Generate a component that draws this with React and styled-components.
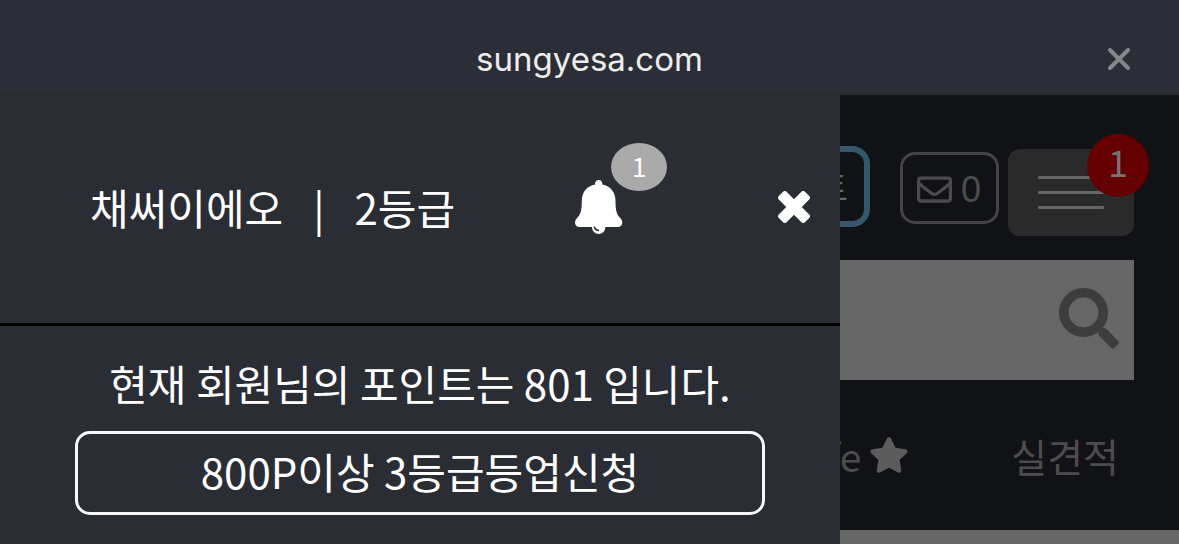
import React from 'react'
import styled, { createGlobalStyle } from 'styled-components'
import { FaRegEnvelope, FaStar } from 'react-icons/fa'

const GlobalStyle = createGlobalStyle`
* {
  box-sizing: border-box;
}
body {
  margin: 0;
  background: #2b2d35;
  color: #ffffff;
  font-family: "Noto Sans CJK KR", sans-serif;
}
button, input {
  font-family: inherit;
  color: inherit;
}
svg {
  display: block;
}
`
const Screen = styled.div`
  display: flex;
  flex-direction: column;
  min-height: 100vh;
`
const TitleBar = styled.header`
  display: grid;
  grid-template-columns: 1fr auto 1fr;
  align-items: center;
  padding: 24px 49px 0;
  height: 95px;
  background: #2b2e37;
  border-bottom: 2px solid #282b31;
`
const SiteName = styled.h1`
  grid-column: 2;
  margin: 0;
  color: #eeeeee;
  font-family: Inter, sans-serif;
  font-size: 33px;
  font-weight: 400;
  line-height: 48px;
`
const IconButton = styled.button`
  display: flex;
  align-items: center;
  justify-content: center;
  margin-left: ${props => props.$end ? "auto" : "0"};
  padding: 0;
  border: none;
  background: none;
`
const Main = styled.div`
  display: grid;
  grid-template-columns: 280fr 113fr;
  flex: 1;
`
const Drawer = styled.aside`
  min-width: 0;
  background: #2b2d35;
`
const Profile = styled.div`
  display: flex;
  align-items: center;
  height: 231px;
  padding: 0 30px 5px 90px;
  border-bottom: 3px solid #000000;
  font-size: 42px;
  line-height: 60px;
  white-space: nowrap;
`
const Member = styled.div`
  display: flex;
  gap: 30px;
  margin-right: 120px;
`
const BellButton = styled(IconButton)`
  position: relative;
`
const BellCount = styled.span`
  position: absolute;
  left: 36px;
  bottom: 43px;
  width: 56px;
  height: 48px;
  border-radius: 50%;
  background: #aaaaaa;
  font-size: 26px;
  line-height: 46px;
  text-align: center;
`
const Points = styled.div`
  display: flex;
  flex-direction: column;
  gap: 18px;
  padding: 27px 75px;
  font-size: 42px;
  line-height: 60px;
  text-align: center;
`
const PointText = styled.p`
  margin: 0;
`
const LevelUp = styled.button`
  height: 84px;
  padding: 0 0 5px;
  border: 3px solid #faf7fb;
  border-radius: 15px;
  background: none;
  font-size: 42px;
  line-height: 60px;
`
const Page = styled.main`
  display: flex;
  flex-direction: column;
  min-width: 0;
  overflow: hidden;
  background: #111215;
`
const Toolbar = styled.div`
  display: flex;
  align-items: center;
  justify-content: flex-end;
  height: 165px;
  padding: 30px 45px 0 0;
`
const PointButton = styled.button`
  flex: none;
  height: 81px;
  margin: 0 30px 12px 0;
  padding: 0 16px;
  border: 6px solid transparent;
  border-radius: 18px;
  background:
    linear-gradient(#111215, #111215) padding-box,
    linear-gradient(90deg, #4a5468, #2f596c) border-box;
  color: #666666;
  font-size: 34px;
`
const MailButton = styled.button`
  display: flex;
  flex: none;
  align-items: center;
  gap: 9px;
  height: 72px;
  margin: 0 9px 9px 0;
  padding: 3px 15px 0 14px;
  border: 3px solid #444444;
  border-radius: 15px;
  background: none;
  color: #4c4c4c;
  font-family: "Liberation Sans", sans-serif;
  font-size: 36px;
  line-height: 48px;
`
const MenuButton = styled.button`
  position: relative;
  display: flex;
  flex: none;
  flex-direction: column;
  align-items: center;
  justify-content: center;
  gap: 12px;
  width: 126px;
  height: 87px;
  padding: 0;
  border: none;
  border-radius: 12px;
  background: #2a2a2a;
`
const MenuLine = styled.span`
  width: 66px;
  height: 3px;
  border-radius: 1px;
  background: #666666;
`
const MenuCount = styled.span`
  position: absolute;
  top: -15px;
  right: -15px;
  width: 62px;
  height: 63px;
  border-radius: 50%;
  background: #660000;
  color: #757575;
  font-size: 36px;
  line-height: 54px;
  text-align: center;
`
const SearchForm = styled.form`
  display: flex;
  align-items: center;
  height: 120px;
  margin-right: 45px;
  padding: 0 15px 3px 0;
  background: #666666;
`
const SearchInput = styled.input`
  flex: 1;
  min-width: 0;
  height: 100%;
  border: none;
  background: none;
  font-size: 42px;
`
const Nav = styled.nav`
  display: flex;
  align-items: center;
  justify-content: flex-end;
  gap: 102px;
  height: 150px;
  padding-right: 60px;
`
const NavLink = styled.a`
  display: flex;
  flex: none;
  align-items: center;
  gap: 8px;
  color: #4c4c4c;
  font-size: 39px;
  line-height: 60px;
  text-decoration: none;
`
const Content = styled.div`
  flex: 1;
  background: #666666;
`

const Bell = () => (
  <svg width="48" height="54" viewBox="0 0 48 54" aria-hidden="true">
    <path fill="#fff" d="M23.7 0a3.6 3.6 0 0 1 3.5 4.6C35.500 6 40.500 12.500 40.500 21c0 9 1 13 4.300 16.500C46.500 39.300 47.300 40.500 47.300 42.500c0 2.800-1.900 4.500-4.500 4.500H4.500C1.900 47 0 45.300 0 42.500c0-2 .8-3.200 2.500-5C5.800 34 6.800 30 6.800 21 6.800 12.500 11.800 6 20.200 4.600A3.600 3.600 0 0 1 23.700 0z" />
    <path fill="#fff" d="M17 46h13.400v1.200a6.700 6.700 0 0 1-13.400 0z" />
    <path fill="none" stroke="#2b2d35" strokeWidth="1.600" d="M19.400 46.600a4.600 4.600 0 0 0 4.600 3.800" />
  </svg>
)

const Cross = () => (
  <svg width="32" height="32" viewBox="0 0 32 32" fill="#fff" aria-hidden="true">
    <rect x="-2.500" y="10.500" width="37" height="11" rx="2.500" transform="rotate(45 16 16)" />
    <rect x="-2.500" y="10.500" width="37" height="11" rx="2.500" transform="rotate(-45 16 16)" />
  </svg>
)

const ThinCross = () => (
  <svg width="22" height="22" viewBox="0 0 22 22" stroke="#85868a" strokeWidth="4" strokeLinecap="round" aria-hidden="true">
    <path d="M2 2l18 18M20 2L2 20" />
  </svg>
)

const Magnifier = () => (
  <svg width="60" height="61" viewBox="0 0 60 61" aria-hidden="true">
    <circle cx="24.500" cy="24.500" r="19.700" fill="none" stroke="#3d3d3d" strokeWidth="9.600" />
    <path fill="#3d3d3d" d="M39.300 41.500L43 40q2.500-.6 4.500 1.300L59.300 53q1.400 1.500 0 3l-4 4q-1.500 1.400-3 0L40.500 48.200q-1.700-2-1.200-4z" />
  </svg>
)

const App = () => {
    return (
        <Screen>
            <GlobalStyle />
            <TitleBar>
                <SiteName>sungyesa.com</SiteName>
                <IconButton $end type="button" aria-label="닫기"><ThinCross /></IconButton>
            </TitleBar>
            <Main>
                <Drawer>
                    <Profile>
                        <Member>
                            <span>채써이에오</span>
                            <span>|</span>
                            <span>2등급</span>
                        </Member>
                        <BellButton type="button" aria-label="알림 1">
                            <Bell />
                            <BellCount>1</BellCount>
                        </BellButton>
                        <IconButton $end type="button" aria-label="메뉴 닫기"><Cross /></IconButton>
                    </Profile>
                    <Points>
                        <PointText>현재 회원님의 포인트는 801 입니다.</PointText>
                        <LevelUp type="button">800P이상 3등급등업신청</LevelUp>
                    </Points>
                </Drawer>
                <Page>
                    <Toolbar>
                        <PointButton type="button">트</PointButton>
                        <MailButton type="button" aria-label="쪽지 0">
                            <FaRegEnvelope size={35} />
                            <span>0</span>
                        </MailButton>
                        <MenuButton type="button" aria-label="메뉴">
                            <MenuLine />
                            <MenuLine />
                            <MenuLine />
                            <MenuCount>1</MenuCount>
                        </MenuButton>
                    </Toolbar>
                    <SearchForm>
                        <SearchInput type="text" aria-label="검색어" />
                        <IconButton type="submit" aria-label="검색"><Magnifier /></IconButton>
                    </SearchForm>
                    <Nav>
                        <NavLink href="#life">fe <FaStar size={40} color="#5c5c5c" /></NavLink>
                        <NavLink href="#estimate">실견적</NavLink>
                    </Nav>
                    <Content />
                </Page>
            </Main>
        </Screen>
    )
}

export default App
